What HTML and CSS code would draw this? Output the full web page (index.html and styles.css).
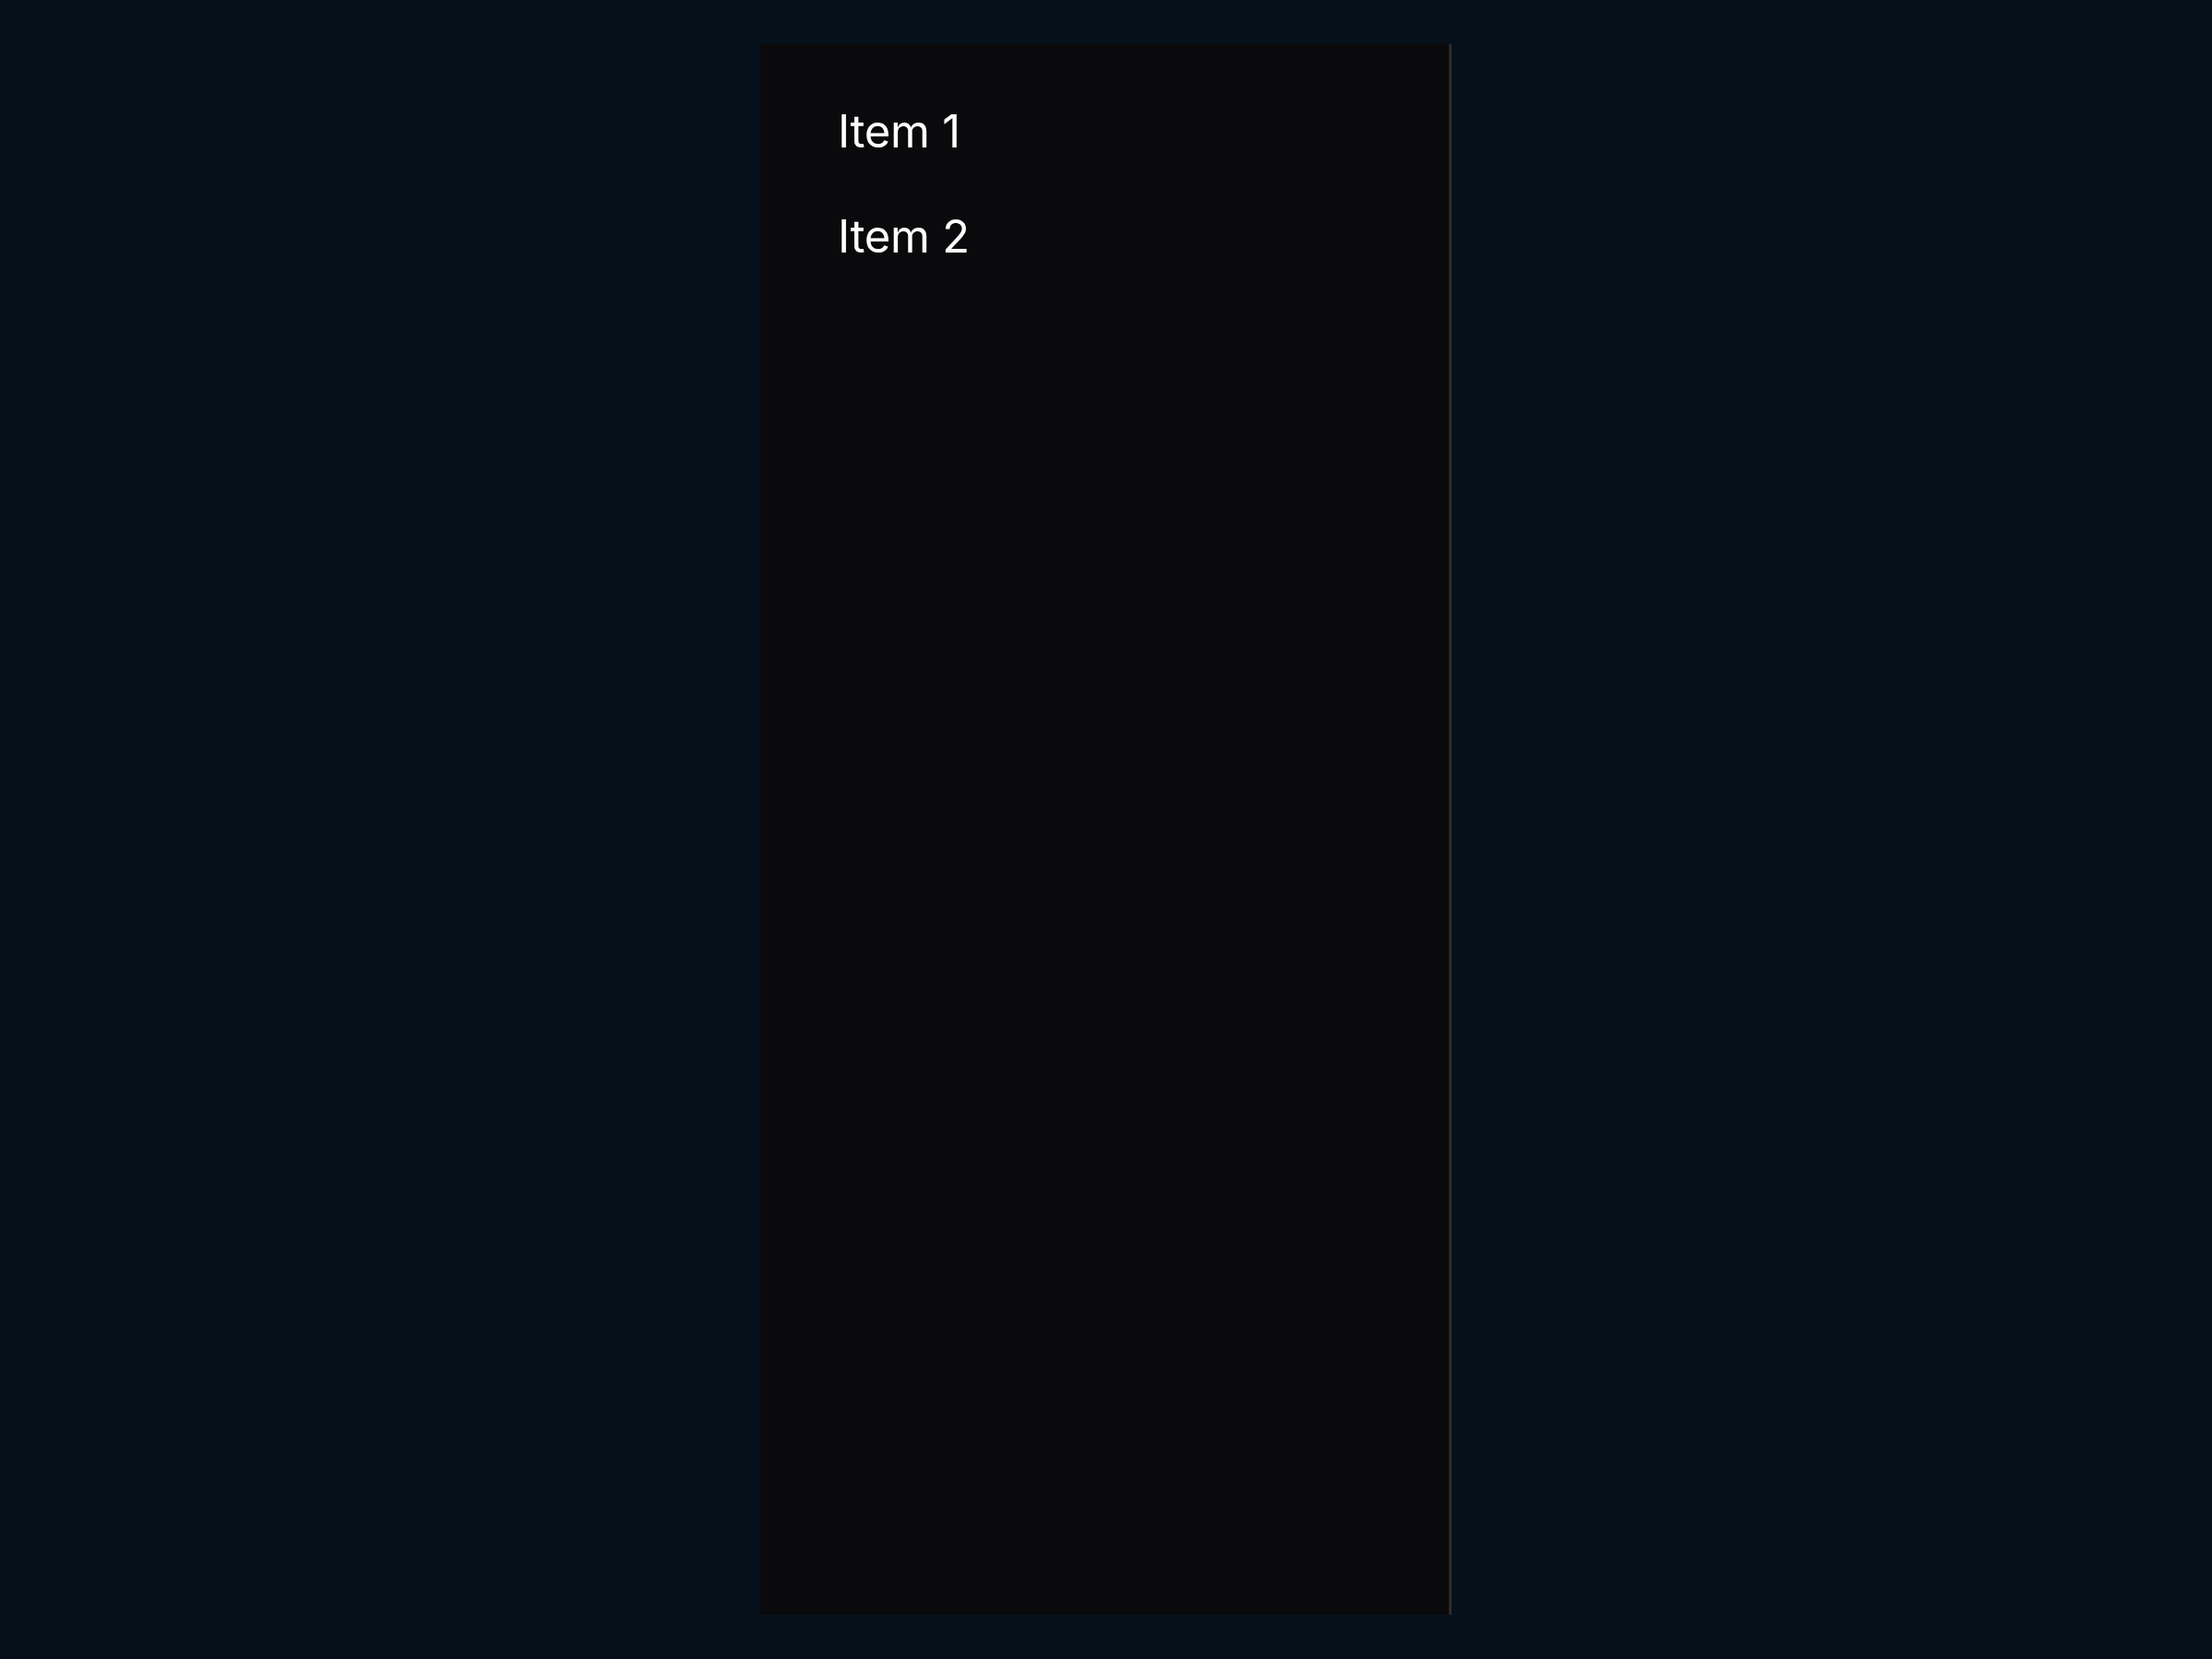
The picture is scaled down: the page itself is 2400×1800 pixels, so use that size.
FILE: index.html
```html
<!DOCTYPE html>
<html lang="en">
<head>
<meta charset="utf-8">
<title>Menu</title>
<link rel="stylesheet" href="styles.css">
</head>
<body>
<div class="page">
  <nav class="panel">
    <ul class="menu">
      <li class="menu-item">Item 1</li>
      <li class="menu-item">Item 2</li>
    </ul>
  </nav>
</div>
</body>
</html>
```
FILE: styles.css
```css
html, body {
  margin: 0;
  padding: 0;
  height: 100%;
}
body {
  background: #06101a;
  font-family: Inter, "Noto Sans", sans-serif;
  color: #ffffff;
}
.page {
  height: 100%;
  box-sizing: border-box;
  padding: 48px 0;
  display: flex;
  justify-content: center;
}
.panel {
  width: 750px;
  height: 100%;
  box-sizing: border-box;
  background: #0a0a0c;
  border-right: 3px solid #2b2b2b;
}
.menu {
  list-style: none;
  margin: 0;
  padding: 66px 0 0 84px;
  display: flex;
  flex-direction: column;
  gap: 56px;
}
.menu-item {
  font-size: 49px;
  line-height: 58px;
  height: 58px;
  letter-spacing: -0.3px;
}
```
